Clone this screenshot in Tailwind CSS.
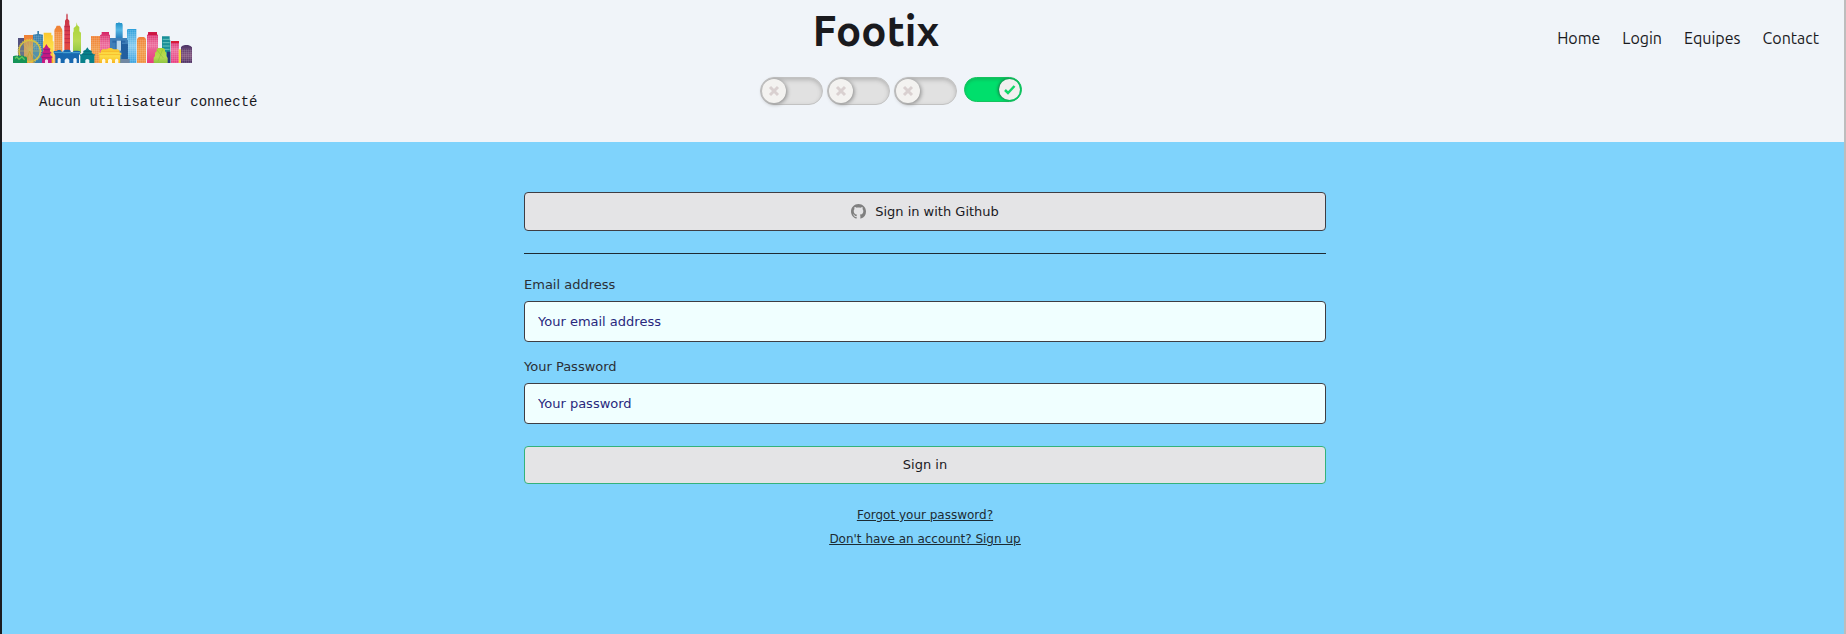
<!DOCTYPE html>
<html lang="fr">
<head>
<meta charset="utf-8">
<meta name="viewport" content="width=device-width, initial-scale=1">
<title>Footix</title>
<script src="https://cdn.jsdelivr.net/npm/@tailwindcss/browser@4"></script>
</head>
<body class="min-h-screen border-l-2 border-[#1b1c20] border-r-2 border-r-[#bdbdbd] bg-[#7fd3fc] text-[#1a1a1e]">
<header class="grid h-[142px] grid-cols-[758fr_262fr_822fr] bg-[#f0f4f9]">
  <div class="flex flex-col items-start pt-3 pl-[10px]">
    <a href="#" aria-label="Accueil">
      <svg class="block h-[51px] w-[181px]" viewBox="36 36 543 153" aria-hidden="true">
        <defs>
          <linearGradient id="red" x2="0" y2="1"><stop stop-color="#c3323f"/><stop offset=".6" stop-color="#dc4053"/><stop offset="1" stop-color="#e44d38"/></linearGradient>
          <linearGradient id="org" x2="0" y2="1"><stop stop-color="#ef8035"/><stop offset=".5" stop-color="#f29a48"/><stop offset="1" stop-color="#f0903c"/></linearGradient>
          <linearGradient id="pink" x2="0" y2="1"><stop stop-color="#d62466"/><stop offset=".4" stop-color="#ec6c9b"/><stop offset="1" stop-color="#e83b80"/></linearGradient>
          <linearGradient id="blue" x2="0" y2="1"><stop stop-color="#188bc4"/><stop offset=".45" stop-color="#55b7e5"/><stop offset="1" stop-color="#1f72b4"/></linearGradient>
          <linearGradient id="sky" x2="0" y2="1"><stop stop-color="#2b9fdb"/><stop offset=".5" stop-color="#87caf0"/><stop offset="1" stop-color="#38a2df"/></linearGradient>
          <linearGradient id="lime" x2="0" y2="1"><stop stop-color="#a9d334"/><stop offset=".6" stop-color="#b9da54"/><stop offset="1" stop-color="#8fc642"/></linearGradient>
          <linearGradient id="yel" x2="0" y2="1"><stop stop-color="#fbc62c"/><stop offset=".5" stop-color="#fde04a"/><stop offset="1" stop-color="#f9b61f"/></linearGradient>
          <linearGradient id="vio" x2="0" y2="1"><stop stop-color="#4d3567"/><stop offset=".6" stop-color="#80527c"/><stop offset="1" stop-color="#492c61"/></linearGradient>
          <pattern id="win" width="6" height="6" patternUnits="userSpaceOnUse"><path d="M0 0H6M0 0V6" stroke="#fff" stroke-opacity=".3" stroke-width="2"/></pattern>
        </defs>
        <path d="M54 114H82V189H54Z" fill="#54517f"/>
        <path d="M72 105H100V189H72Z" fill="url(#org)"/>
        <path d="M99 104L112 102V93H117V102L129 104V189H99Z" fill="#397fad"/>
        <path d="M131 98H154V106H158V124H161V189H129V124H131Z" fill="url(#yel)"/>
        <path d="M163 189V94Q163 86 167 84L170 77H180L184 84Q187 87 187 94V189Z" fill="url(#org)"/>
        <path d="M193 152V80L195 72V62L199 56V44L201 40L203 44V56L208 62V72L210 80V152Z" fill="url(#red)"/>
        <path d="M193 80H210M194 92H210M194 104H210M194 116H210M194 128H210" stroke="#b32042" stroke-width="2"/>
        <path d="M219 160V98L221 94V84L226 80L229 76L230 67L232 76L238 81V94L243 98V160Z" fill="url(#lime)"/>
        <path d="M273 108H300V189H273Z" fill="url(#org)"/>
        <path d="M300 189V106L305 103V96H327V103L330 106V189Z" fill="url(#pink)"/>
        <path d="M347 120V74L348 69H355L357 65L359 69H366L368 74V120Z" fill="url(#blue)"/>
        <path d="M330 114H384V189H330Z" fill="#3f7fb8"/>
        <path d="M364 132H384V189H364Z" fill="#225f9f"/>
        <path d="M337 122H376V128H337Z" fill="#2a67a8"/>
        <path d="M347 122H350V152H347ZM363 122H366V152H363Z" fill="#225f9f"/>
        <path d="M350 122H363V152H350Z" fill="#b9d6ec"/>
        <path d="M381 90L383 87H409V189H384V120H381Z" fill="url(#sky)"/>
        <path d="M411 189V118Q414 111 419 111H431Q436 112 438 118V189Z" fill="url(#org)"/>
        <path d="M441 189V105L444 103V96H471V103L474 105V189Z" fill="url(#pink)"/>
        <path d="M446 97H471V105H444Z" fill="#cb1741"/>
        <path d="M486 189V109H509V121H511V189Z" fill="#188f98"/>
        <path d="M488 118H509M488 128H509M488 138H509M488 148H509" stroke="#67c3bd" stroke-width="3"/>
        <path d="M513 123H537V189H513Z" fill="url(#pink)"/>
        <path d="M513 123H537V129H513Z" fill="#d71b35"/>
        <path d="M536 148H544V189H536Z" fill="#f4db3a"/>
        <path d="M501 155H511V189H501Z" fill="#27377f"/>
        <path d="M543 189V141Q546 136 555 135H564Q573 137 576 142V189Z" fill="url(#vio)"/>
        <path d="M273 108H300V189H273ZM300 108H328V150H300ZM383 90H409V189H383ZM441 107H474V145H441ZM411 118H438V189H411ZM513 130H537V189H513ZM544 146H576V189H544ZM100 105H128V150H100ZM163 96H187V150H163Z" fill="url(#win)"/>
        <circle cx="89" cy="153" r="32" fill="#86b5a0" fill-opacity=".35"/>
        <circle cx="89" cy="153" r="32" fill="none" stroke="#d9c43c" stroke-width="4"/>
        <circle cx="89" cy="153" r="35" fill="none" stroke="#e6d45a" stroke-width="3" stroke-dasharray="3 4"/>
        <path d="M57 153H121M89 121V185M66 130L112 176M112 130L66 176M77 123L101 183M101 123L77 183" stroke="#cbc15c" stroke-width="1.5"/>
        <path d="M89 153L76 189M89 153L103 189" stroke="#c4a43c" stroke-width="3"/>
        <path d="M39 189V169Q48 164 57 168Q67 164 75 170Q80 168 81 175V189Z" fill="#159357"/>
        <path d="M45 175L51 171L57 178L66 171L74 179" fill="none" stroke="#62c65b" stroke-width="4"/>
        <path d="M126 189V174H123V169L128 165V160H124L130 154V148H126L134 142L139 132L145 142L153 148H150V154L156 160H151V165L157 170V174H155V189Z" fill="#c51a83"/>
        <path d="M130 149H149M129 161H151M126 173H154" stroke="#6f2079" stroke-width="2"/>
        <path d="M135 189V181Q140 175 144 181V189Z" fill="#f5d7eb"/>
        <path d="M166 189V166L161 158V153H170L174 150H181L185 155H190V152L196 149H207L212 152V156H218L222 152H233L241 154V159L237 166V189Z" fill="#1767af"/>
        <path d="M163 157H188M188 158H215M216 158H240" stroke="#4ea9d7" stroke-width="3"/>
        <path d="M173 189V177Q177 171 182 177V189ZM194 189V180Q201 170 208 180V189ZM220 189V177Q225 171 230 177V189Z" fill="#edf4fa"/>
        <path d="M241 189V168L238 163H245L250 158V153L257 149L262 142L267 149L275 153V158L280 163H286L283 168V189Z" fill="#08818b"/>
        <path d="M246 163H280M251 154H275" stroke="#066474" stroke-width="2"/>
        <path d="M256 189V180Q262 174 268 180V189Z" fill="#e9f4f7"/>
        <path d="M363 177H389V189H363Z" fill="#7188a3"/>
        <path d="M298 189V164H296V158H302V153L307 148H320L327 144H334L341 148H354L359 153V158H364V164H361V189Z" fill="url(#yel)"/>
        <path d="M297 164H363M304 154H358" stroke="#f4aa20" stroke-width="2"/>
        <path d="M306 189V180Q311 173 316 180V189ZM324 189V180Q330 173 336 180V189ZM345 189V180Q350 173 355 180V189Z" fill="#fff8df"/>
        <path d="M461 189V173L465 168V158L470 154V148L475 144H489L495 148V154L499 158V168L503 174V189Z" fill="url(#lime)"/>
        <path d="M471 150L490 174M488 148L474 184" stroke="#7fbd38" stroke-width="3" stroke-opacity=".5"/>
      </svg>
    </a>
    <p class="mt-[29px] ml-[27px] font-['Liberation_Mono',monospace] text-[14px] leading-5">Aucun utilisateur connecté</p>
  </div>

  <div class="flex flex-col pt-1">
    <h1 class="pr-[30px] text-center font-[Ubuntu,'Noto_Sans',sans-serif] text-[42px] leading-[54px] font-bold">Footix</h1>
    <div class="mt-[19px] flex items-start gap-1">
      <label class="relative block h-[28px] w-[63px] shrink-0">
        <input type="checkbox" aria-label="Option 1" class="block h-full w-full appearance-none rounded-full border border-[#c2c2c2] bg-[#e1e1e1] shadow-[inset_0_2px_4px_#b5b5b5]">
        <svg class="pointer-events-none absolute top-[2px] left-[2px] size-6 rounded-full bg-[#f3f2f0] shadow-[1px_1px_4px_#858585]" viewBox="0 0 24 24" aria-hidden="true"><path d="M8 8L16 16M16 8L8 16" stroke="#d9d0d0" stroke-width="3"/></svg>
      </label>
      <label class="relative block h-[28px] w-[63px] shrink-0">
        <input type="checkbox" aria-label="Option 2" class="block h-full w-full appearance-none rounded-full border border-[#c2c2c2] bg-[#e1e1e1] shadow-[inset_0_2px_4px_#b5b5b5]">
        <svg class="pointer-events-none absolute top-[2px] left-[2px] size-6 rounded-full bg-[#f3f2f0] shadow-[1px_1px_4px_#858585]" viewBox="0 0 24 24" aria-hidden="true"><path d="M8 8L16 16M16 8L8 16" stroke="#d9d0d0" stroke-width="3"/></svg>
      </label>
      <label class="relative block h-[28px] w-[63px] shrink-0">
        <input type="checkbox" aria-label="Option 3" class="block h-full w-full appearance-none rounded-full border border-[#c2c2c2] bg-[#e1e1e1] shadow-[inset_0_2px_4px_#b5b5b5]">
        <svg class="pointer-events-none absolute top-[2px] left-[2px] size-6 rounded-full bg-[#f3f2f0] shadow-[1px_1px_4px_#858585]" viewBox="0 0 24 24" aria-hidden="true"><path d="M8 8L16 16M16 8L8 16" stroke="#d9d0d0" stroke-width="3"/></svg>
      </label>
      <label class="relative ml-[3px] block h-[25px] w-[58px] shrink-0">
        <input type="checkbox" checked aria-label="Option 4" class="block h-full w-full appearance-none rounded-full border border-[#16c25f] bg-[#00df6c] shadow-[inset_0_2px_3px_#0abf5c]">
        <svg class="pointer-events-none absolute top-[2px] right-[2px] size-[21px] rounded-full bg-[#f1f0ef] shadow-[-1px_0_3px_#15703f]" viewBox="0 0 21 21" aria-hidden="true"><path d="M6 11L9 14L15.500 7" fill="none" stroke="#12d768" stroke-width="2.500"/></svg>
      </label>
    </div>
  </div>

  <nav class="flex items-start justify-end gap-[22px] pt-[26px] pr-[25px] font-[Ubuntu,'Noto_Sans',sans-serif] text-[16px] leading-6">
    <a href="#">Home</a>
    <a href="#">Login</a>
    <a href="#">Equipes</a>
    <a href="#">Contact</a>
  </nav>
</header>

<main class="pt-[50px] pr-4 pl-5 font-['DejaVu_Sans',sans-serif] text-[13px] leading-[17px]">
  <form class="mx-auto flex max-w-[802px] flex-col">
    <button type="button" class="flex h-[39px] items-center justify-center gap-[9px] rounded-[4px] border border-[#3e3e44] bg-[#e4e4e6]">
      <svg class="size-[15px]" viewBox="0 0 16 16" fill="#808080" aria-hidden="true"><path d="M8 0C3.580 0 0 3.580 0 8c0 3.540 2.290 6.530 5.470 7.590.4.070.55-.17.55-.38 0-.19-.01-.82-.01-1.490-2.010.37-2.530-.49-2.690-.94-.09-.23-.48-.94-.82-1.130-.28-.15-.68-.52-.01-.53.63-.01 1.080.58 1.230.82.72 1.210 1.870.87 2.330.66.07-.52.28-.87.51-1.070-1.780-.2-3.640-.89-3.640-3.950 0-.87.31-1.590.82-2.150-.08-.2-.36-1.020.08-2.120 0 0 .67-.21 2.200.82.64-.18 1.320-.27 2-.27s1.360.09 2 .27c1.530-1.040 2.200-.82 2.200-.82.44 1.100.16 1.920.08 2.120.51.56.82 1.270.82 2.150 0 3.070-1.870 3.750-3.650 3.950.29.25.54.73.54 1.480 0 1.070-.01 1.930-.01 2.200 0 .21.15.46.55.38A8.010 8.010 0 0 0 16 8c0-4.420-3.580-8-8-8z"/></svg>
      <span>Sign in with Github</span>
    </button>
    <hr class="my-[22px] h-px border-0 bg-[#1f2a32]">
    <label for="email" class="mb-2 text-[#2b2f36]">Email address</label>
    <input id="email" type="email" placeholder="Your email address" class="mb-4 h-[41px] rounded-[4px] border border-[#3e3e44] bg-[#f0ffff] px-[13px] placeholder:text-[#28287d]">
    <label for="password" class="mb-2 text-[#2b2f36]">Your Password</label>
    <input id="password" type="password" placeholder="Your password" class="mb-[22px] h-[41px] rounded-[4px] border border-[#3e3e44] bg-[#f0ffff] px-[13px] placeholder:text-[#28287d]">
    <button type="submit" class="h-[38px] rounded-[4px] border border-[#34b27b] bg-[#e4e4e6] pb-[2px]">Sign in</button>
    <div class="mt-[23px] flex flex-col items-center gap-2 text-[12px] leading-4 text-[#1c2b33] underline">
      <a href="#">Forgot your password?</a>
      <a href="#">Don't have an account? Sign up</a>
    </div>
  </form>
</main>
</body>
</html>
